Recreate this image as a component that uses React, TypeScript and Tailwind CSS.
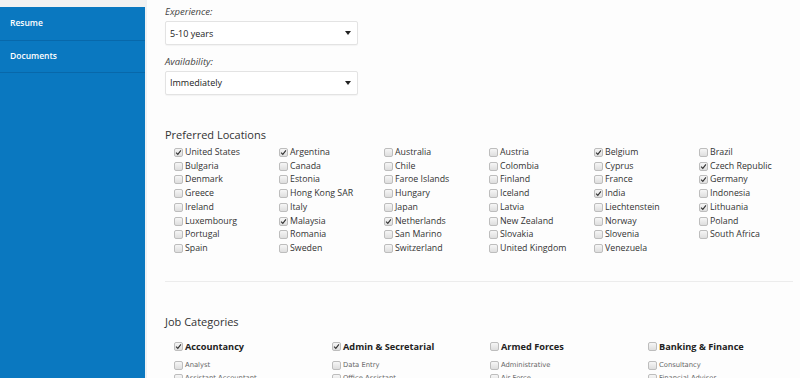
import React from 'react';

const locations: [string, boolean][] = [
  ['United States', true], ['Argentina', true], ['Australia', false], ['Austria', false], ['Belgium', true], ['Brazil', false],
  ['Bulgaria', false], ['Canada', false], ['Chile', false], ['Colombia', false], ['Cyprus', false], ['Czech Republic', true],
  ['Denmark', false], ['Estonia', false], ['Faroe Islands', false], ['Finland', false], ['France', false], ['Germany', true],
  ['Greece', false], ['Hong Kong SAR', false], ['Hungary', false], ['Iceland', false], ['India', true], ['Indonesia', false],
  ['Ireland', false], ['Italy', false], ['Japan', false], ['Latvia', false], ['Liechtenstein', false], ['Lithuania', true],
  ['Luxembourg', false], ['Malaysia', true], ['Netherlands', true], ['New Zealand', false], ['Norway', false], ['Poland', false],
  ['Portugal', false], ['Romania', false], ['San Marino', false], ['Slovakia', false], ['Slovenia', false], ['South Africa', false],
  ['Spain', false], ['Sweden', false], ['Switzerland', false], ['United Kingdom', false], ['Venezuela', false],
];

const categories = [
  { name: 'Accountancy', checked: true, items: ['Analyst', 'Assistant Accountant'] },
  { name: 'Admin & Secretarial', checked: true, items: ['Data Entry', 'Office Assistant'] },
  { name: 'Armed Forces', checked: false, items: ['Administrative', 'Air Force'] },
  { name: 'Banking & Finance', checked: false, items: ['Consultancy', 'Financial Advisor'] },
];

function Box({ checked }: { checked: boolean }) {
  return (
    <span className="relative inline-flex h-[9px] w-[9px] shrink-0 items-center justify-center rounded-[2px] border border-[#bdbdbd] bg-gradient-to-b from-[#f6f6f6] to-[#dedede]">
      {checked && (
        <svg viewBox="0 0 10 10" className="h-[7px] w-[7px]">
          <path d="M1.5 5.2 L4 7.6 L8.5 2" fill="none" stroke="#333" strokeWidth="1.6" />
        </svg>
      )}
    </span>
  );
}

function Select({ value }: { value: string }) {
  return (
    <div className="flex h-[24px] w-[193px] items-center justify-between rounded-[2px] border border-[#e3e3e3] bg-white pl-[4px] pr-[6px] text-[9px] text-[#222] shadow-[0_1px_1px_rgba(0,0,0,0.04)]">
      <span>{value}</span>
      <svg viewBox="0 0 6 4" className="h-[4px] w-[6px]">
        <path d="M0 0 L6 0 L3 4 Z" fill="#222" />
      </svg>
    </div>
  );
}

export default function App() {
  return (
    <div className="flex h-[378px] w-[800px] overflow-hidden bg-[#fdfdfd] font-['Open_Sans',sans-serif]">
      <aside className="flex w-[145px] shrink-0 flex-col bg-[#0a78c0]">
        <div className="h-[7px] bg-[#f2f2f2]" />
        <div className="flex h-[34px] items-center border-b border-[#0868aa] pl-[10px] text-[8.5px] font-semibold text-white">Resume</div>
        <div className="flex h-[32px] items-center border-b border-[#0868aa] pl-[10px] text-[8.5px] font-semibold text-white">Documents</div>
      </aside>
      <div className="w-[2px] shrink-0 bg-[#eef1f4]" />
      <main className="flex-1 pl-[18px] pr-[7px]">
        <div className="pt-[5px]">
          <div className="mb-[2px] text-[9.5px] italic text-[#444]">Experience:</div>
          <Select value="5-10 years" />
          <div className="mb-[1px] mt-[10px] text-[9.5px] italic text-[#444]">Availability:</div>
          <Select value="Immediately" />
        </div>

        <h2 className="mt-[32px] text-[11px] leading-[16px] text-[#333]">Preferred Locations</h2>
        <div className="mt-[3px] grid grid-cols-[repeat(6,105px)] pl-[9px] text-[8.8px] text-[#333]">
          {locations.map(([name, checked]) => (
            <label key={name} className="flex h-[13.75px] items-center gap-[2px]">
              <Box checked={checked} />
              <span className="leading-none">{name}</span>
            </label>
          ))}
        </div>

        <div className="mt-[25px] h-px w-[628px] bg-[#ececec]" />

        <h2 className="mt-[32px] text-[11px] leading-[16px] text-[#333]">Job Categories</h2>
        <div className="mt-[9px] grid grid-cols-[repeat(4,158px)] pl-[9px]">
          {categories.map((c) => (
            <div key={c.name} className="flex flex-col">
              <div className="flex h-[16px] items-center gap-[2px]">
                <Box checked={c.checked} />
                <span className="text-[9.2px] font-bold text-[#222]">{c.name}</span>
              </div>
              <div className="mt-[4px] flex flex-col">
                {c.items.map((it) => (
                  <div key={it} className="flex h-[13px] items-center gap-[2px]">
                    <Box checked={false} />
                    <span className="font-['DejaVu_Sans',sans-serif] text-[6.8px] text-[#666]">{it}</span>
                  </div>
                ))}
              </div>
            </div>
          ))}
        </div>
      </main>
    </div>
  );
}
